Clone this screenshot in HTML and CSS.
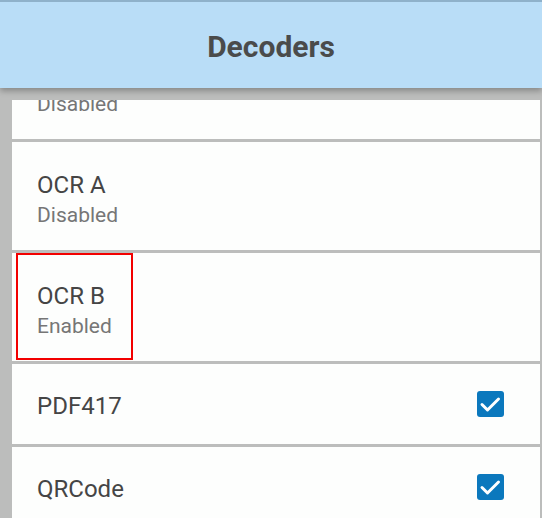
FILE: index.html
```html
<!DOCTYPE html>
<html lang="en">
<head>
  <meta charset="UTF-8">
  <title>Decoders</title>
  <link rel="stylesheet" href="styles.css">
</head>
<body>
  <!-- Title bar -->
  <header class="app-bar">
    <h1 class="app-title">Decoders</h1>
  </header>

  <!-- Scrolled decoder list -->
  <main class="content">
    <div class="viewport">
      <ul class="decoder-list">
        <li class="decoder decoder--first">
          <div class="decoder-text">
            <p class="decoder-name">MSI</p>
            <p class="decoder-state">Disabled</p>
          </div>
        </li>

        <li class="decoder decoder--two">
          <div class="decoder-text">
            <p class="decoder-name">OCR A</p>
            <p class="decoder-state">Disabled</p>
          </div>
        </li>

        <li class="decoder decoder--two">
          <div class="decoder-text">
            <p class="decoder-name">OCR B</p>
            <p class="decoder-state">Enabled</p>
          </div>
          <span class="focus-ring"></span>
        </li>

        <li class="decoder decoder--one">
          <p class="decoder-name">PDF417</p>
          <span class="check">
            <svg viewBox="0 0 27 26"><polyline points="5,13.5 10.5,19 21.5,8"/></svg>
          </span>
        </li>

        <li class="decoder decoder--one">
          <p class="decoder-name">QRCode</p>
          <span class="check">
            <svg viewBox="0 0 27 26"><polyline points="5,13.5 10.5,19 21.5,8"/></svg>
          </span>
        </li>
      </ul>
    </div>
  </main>
</body>
</html>
```

FILE: styles.css
```css
*, *:before,
*:after {
  box-sizing: border-box;
}

html, body {
  height: 100%;
}

body {
  margin: 0;
  display: flex;
  flex-direction: column;
  font-family: Roboto, 'Noto Sans', sans-serif;
  background: #bcbdbc;
  overflow: hidden;
}

.app-bar {
  position: relative;
  z-index: 2;
  height: 88px;
  flex-shrink: 0;
  display: flex;
  justify-content: center;
  align-items: center;
  padding-top: 2px;
  background: #b9ddf7;
  border-top: 2px solid #8fb1ca;
  box-shadow: 0 3px 6px rgba(0, 0, 0, 0.28);
}

.app-title {
  margin: 0;
  font-size: 30px;
  font-weight: 700;
  color: #4a4b4b;
}

.content {
  flex: 1;
  min-height: 0;
  padding: 12px 2px 0 12px;
}

.viewport {
  height: 100%;
  overflow: hidden;
}

.decoder-list {
  list-style: none;
  margin: -69px 0 0 0;
  padding: 0;
  display: flex;
  flex-direction: column;
  gap: 3px;
}

.decoder {
  position: relative;
  display: flex;
  align-items: center;
  justify-content: space-between;
  padding: 0 36px 0 25px;
  background: #fdfefd;
}

.decoder p {
  margin: 0;
}

.decoder--first {
  height: 108px;
  align-items: flex-start;
  padding-top: 29px;
}

.decoder--two {
  height: 108px;
  align-items: flex-start;
  padding-top: 29px;
}

.decoder--one {
  height: 80px;
  padding-top: 4px;
}

.decoder-name {
  font-size: 24px;
  line-height: 28px;
  color: #454545;
}

.decoder-state {
  margin-top: 3px !important;
  font-size: 21px;
  line-height: 26px;
  color: #767676;
}

.focus-ring {
  position: absolute;
  top: 0;
  left: 4px;
  width: 117px;
  height: 107px;
  border: 2px solid #f20000;
}

.check {
  display: block;
  width: 27px;
  height: 26px;
  margin-top: -4px;
  border-radius: 3px;
  background: #0b78bd;
}

.check svg {
  display: block;
  width: 100%;
  height: 100%;
  fill: none;
  stroke: #ffffff;
  stroke-width: 3px;
  stroke-linecap: round;
  stroke-linejoin: round;
}
```
